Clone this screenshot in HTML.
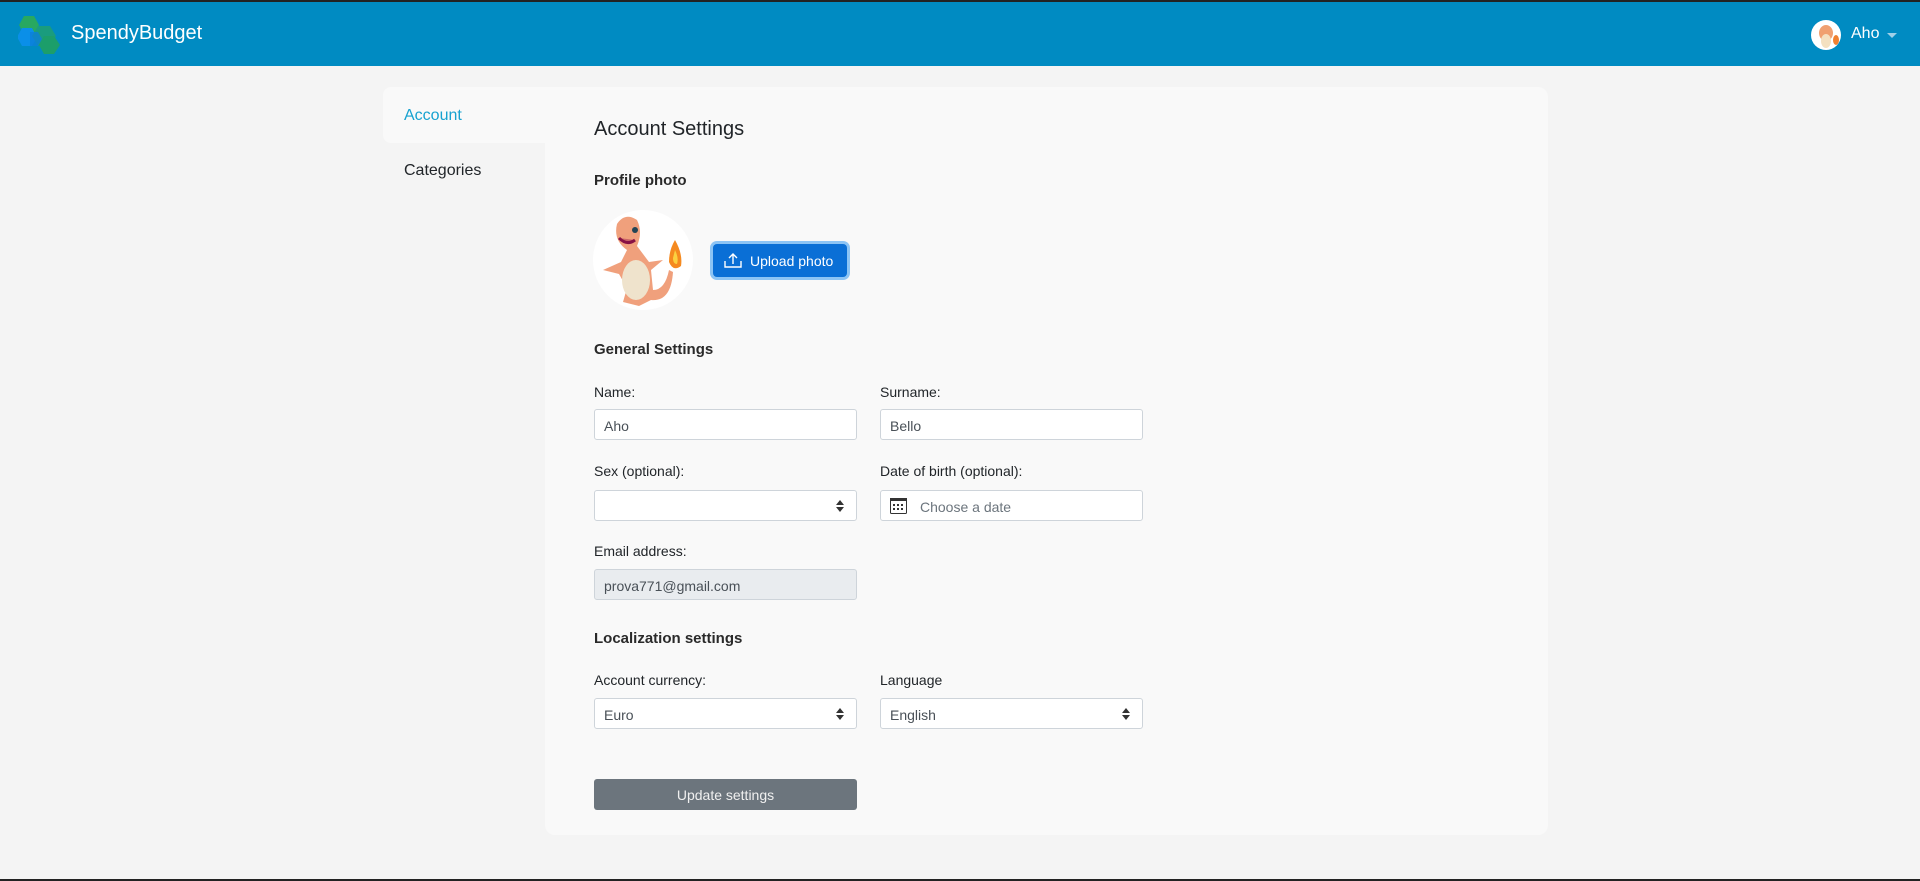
<!DOCTYPE html>
<html><head><meta charset="utf-8">
<style>
*{box-sizing:border-box;margin:0;padding:0}
body{width:1920px;height:881px;background:#f4f4f4;font-family:"Liberation Sans",sans-serif;color:#212529;position:relative;overflow:hidden}
.top{position:absolute;left:0;top:0;width:1920px;height:2px;background:#222}
.nav{position:absolute;left:0;top:2px;width:1920px;height:64px;background:#008bc2}
.brand{position:absolute;left:71px;top:20px;font-size:20px;color:#fff}
.user{position:absolute;left:1811px;top:18px;width:30px;height:30px;border-radius:50%;background:#fff;overflow:hidden}
.uname{position:absolute;left:1851px;top:23px;color:#fff;font-size:16px}
.caret{position:absolute;left:1887px;top:31px;border-left:5px solid transparent;border-right:5px solid transparent;border-top:5px solid #9fd0e8}
.tab{position:absolute;left:383px;top:87px;width:170px;height:56px;background:#f9f9f9;border-radius:8px 0 0 8px}
.tab span{position:absolute;left:21px;top:20px;font-size:16px;color:#17a2d0}
.cat{position:absolute;left:404px;top:162px;font-size:16px}
.card{position:absolute;left:545px;top:87px;width:1003px;height:748px;background:#f9f9f9;border-radius:0 10px 10px 10px}
.abs{position:absolute}
h1{position:absolute;left:594px;top:118px;font-size:20px;font-weight:500}
h2{position:absolute;left:594px;font-size:15px;font-weight:bold;color:#2a2a2a}
label{position:absolute;font-size:14px}
.in{position:absolute;width:263px;height:31px;background:#fff;border:1px solid #ced4da;border-radius:3px;font-size:14px;padding:8px 9px;color:#495057}
.sel::after{content:"";position:absolute;right:12px;top:9px;border-left:4px solid transparent;border-right:4px solid transparent;border-bottom:5px solid #333}
.sel::before{content:"";position:absolute;right:12px;top:16px;border-left:4px solid transparent;border-right:4px solid transparent;border-top:5px solid #333}
.bot{position:absolute;left:0;top:879px;width:1920px;height:2px;background:#222}
</style></head><body>
<div class="top"></div>
<div class="nav">
<svg class="abs" style="left:18px;top:14px" width="46" height="40" viewBox="0 0 46 40">
<polygon points="6,0 16,0 21,9 16,18 6,18 1,9" fill="#28a860"/>
<polygon points="4,12 14,12 19,21 14,30 4,30 -1,21" fill="#0a8fe8"/>
<polygon points="20,10 32,10 38,20 32,30 20,30 14,20" fill="#1a9c7e"/>
<polygon points="26,20 36,20 42,29 36,38 26,38 21,29" fill="#1c9e6a"/>
<polygon points="12,16 20,16 24,23 20,30 12,30" fill="#0b7fd8" opacity=".8"/>
</svg>
<div class="brand">SpendyBudget</div>
<div class="user"><svg width="30" height="30"><ellipse cx="15" cy="13" rx="7" ry="8" fill="#f0a070"/><ellipse cx="15" cy="21" rx="5" ry="7" fill="#f4e0c0"/><ellipse cx="25" cy="20" rx="3" ry="5" fill="#f08030"/></svg></div>
<div class="uname">Aho</div><div class="caret"></div>
</div>
<div class="tab"><span>Account</span></div>
<div class="cat">Categories</div>
<div class="card"></div>
<h1>Account Settings</h1>
<h2 style="top:172px">Profile photo</h2>
<div class="abs" style="left:593px;top:210px;width:100px;height:100px;border-radius:50%;background:#fff;overflow:hidden">
<svg width="100" height="100" viewBox="0 0 100 100">
<path d="M10 60 L28 52 L34 40 Q20 30 24 14 Q32 2 44 10 Q50 22 44 36 L56 52 L70 50 L58 60 L60 80 Q72 80 76 60 L80 62 Q78 92 58 90 L46 96 L30 92 L34 78 L26 64 Z" fill="#f0a07c"/>
<ellipse cx="43" cy="70" rx="14" ry="20" fill="#efe3cc"/>
<circle cx="42" cy="20" r="3" fill="#245"/>
<path d="M26 28 Q34 36 42 30" stroke="#814" stroke-width="3" fill="#c66"/>
<path d="M82 30 Q90 44 88 56 Q80 62 76 52 Q76 40 82 30Z" fill="#f58a20"/>
<path d="M82 40 Q86 48 84 54 Q80 54 80 48Z" fill="#fbd040"/>
</svg></div>
<div class="abs" style="left:713px;top:244px;width:134px;height:33px;border-radius:4px;background:#0a6fd6;box-shadow:0 0 0 3px #8cc4f5;color:#fff;font-size:14px">
<svg class="abs" style="left:11px;top:9px" width="18" height="15" viewBox="0 0 18 15" fill="none" stroke="#fff" stroke-width="1.4"><path d="M1 8v6h16V8M9 11V1M5 5l4-4 4 4"/></svg>
<span class="abs" style="left:37px;top:9px">Upload photo</span></div>
<h2 style="top:341px">General Settings</h2>
<label style="left:594px;top:384px">Name:</label>
<label style="left:880px;top:384px">Surname:</label>
<div class="in" style="left:594px;top:409px">Aho</div>
<div class="in" style="left:880px;top:409px">Bello</div>
<label style="left:594px;top:463px">Sex (optional):</label>
<label style="left:880px;top:463px">Date of birth (optional):</label>
<div class="in sel" style="left:594px;top:490px"></div>
<div class="in" style="left:880px;top:490px;padding-left:39px;color:#6c757d">Choose a date
<svg class="abs" style="left:9px;top:7px" width="17" height="16" viewBox="0 0 17 16"><rect x=".5" y=".5" width="16" height="15" rx="1" fill="none" stroke="#333"/><rect x="0" y="0" width="17" height="3" fill="#333"/><g fill="#333"><rect x="3" y="6" width="2" height="2"/><rect x="7" y="6" width="2" height="2"/><rect x="11" y="6" width="2" height="2"/><rect x="3" y="10" width="2" height="2"/><rect x="7" y="10" width="2" height="2"/><rect x="11" y="10" width="2" height="2"/></g></svg></div>
<label style="left:594px;top:543px">Email address:</label>
<div class="in" style="left:594px;top:569px;background:#e9ecef">prova771@gmail.com</div>
<h2 style="top:630px">Localization settings</h2>
<label style="left:594px;top:672px">Account currency:</label>
<label style="left:880px;top:672px">Language</label>
<div class="in sel" style="left:594px;top:698px">Euro</div>
<div class="in sel" style="left:880px;top:698px">English</div>
<div class="abs" style="left:594px;top:779px;width:263px;height:31px;background:#6c757d;border-radius:3px;color:#f0f0f0;font-size:14px;text-align:center;line-height:33px">Update settings</div>
<div class="bot"></div>
</body></html>
